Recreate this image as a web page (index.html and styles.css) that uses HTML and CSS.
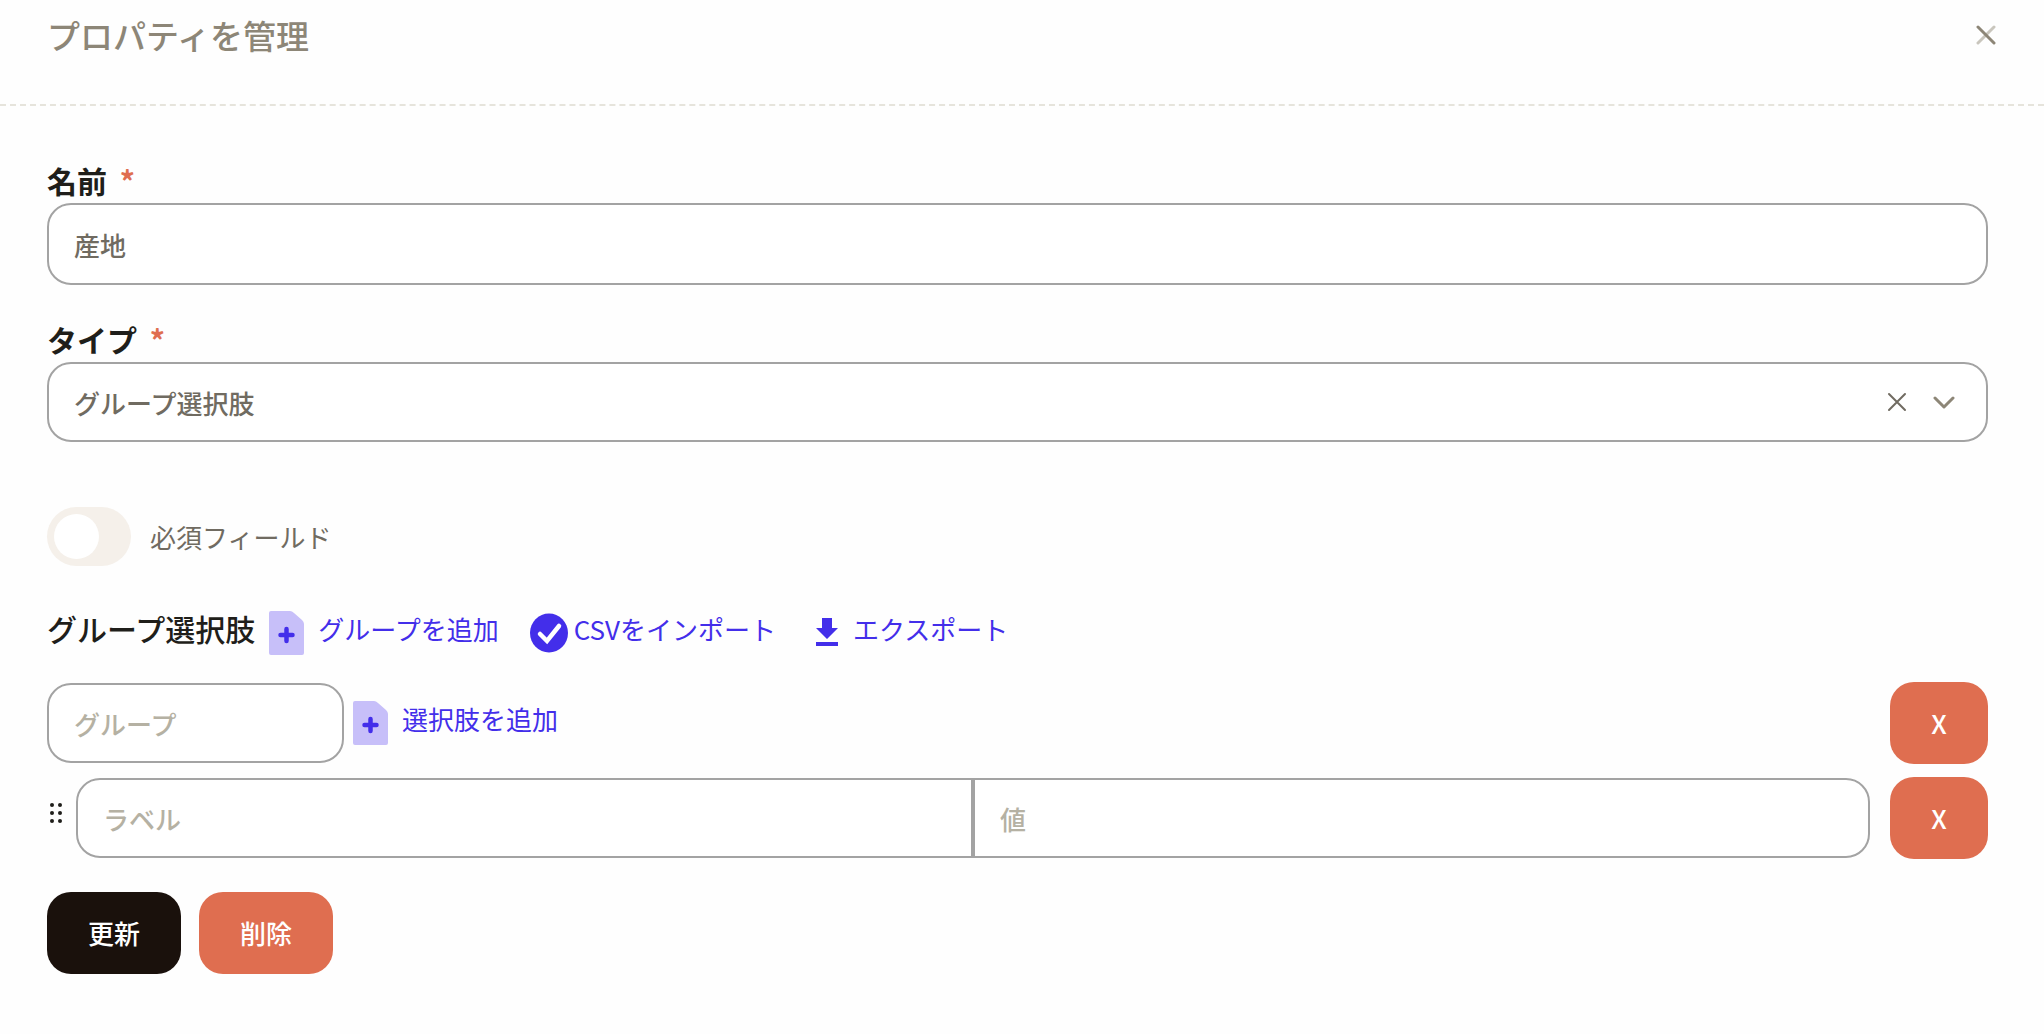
FILE: index.html
```html
<!DOCTYPE html>
<html lang="ja">
<head>
  <meta charset="UTF-8">
  <meta name="viewport" content="width=device-width, initial-scale=1.0">
  <title>プロパティを管理</title>
  <link rel="stylesheet" href="styles.css">
</head>
<body>
  <header class="header">
    <h1 class="title">プロパティを管理</h1>
    <button type="button" class="icon-button" aria-label="閉じる">
      <svg width="20" height="20" viewBox="0 0 20 20" fill="none" stroke="#8d8677" stroke-width="3" stroke-linecap="round">
        <path d="M18 2L2 18" stroke="#c9c6bd"/>
        <path d="M2 2l16 16"/>
      </svg>
    </button>
  </header>

  <form class="form">
    <div class="field">
      <label for="name" class="label">名前 <span class="required">*</span></label>
      <input id="name" class="input input-tall" type="text" value="産地">
    </div>

    <div class="field">
      <label for="type" class="label">タイプ <span class="required">*</span></label>
      <div class="select-box">
        <select id="type" class="input select">
          <option>グループ選択肢</option>
        </select>
        <div class="select-icons">
          <button type="button" class="icon-button" aria-label="クリア">
            <svg width="20" height="20" viewBox="0 0 20 20" fill="none" stroke="#706b61" stroke-width="2" stroke-linecap="round">
              <path d="M2 2l16 16M18 2L2 18"/>
            </svg>
          </button>
          <svg class="chevron" width="22" height="14" viewBox="0 0 22 14" fill="none" stroke="#8d8677" stroke-width="3" stroke-linecap="round" stroke-linejoin="round">
            <path d="M2 3l9 9 9-9"/>
          </svg>
        </div>
      </div>
    </div>

    <div class="switch-row">
      <input id="required" class="switch" type="checkbox">
      <label for="required">必須フィールド</label>
    </div>

    <div class="group-header">
      <h2 class="subtitle">グループ選択肢</h2>
      <button type="button" class="link add-link">
        <svg width="35" height="44" viewBox="0 0 35 44">
          <path d="M2 0H21Q23 0 25 2L33 9Q35 11 35 13V42Q35 44 33 44H2Q0 44 0 42V2Q0 0 2 0Z" fill="#c7bff9"/>
          <path d="M17.500 18v12M11.500 24h12" stroke="#432eea" stroke-width="4.500" stroke-linecap="round"/>
        </svg>
        <span>グループを追加</span>
      </button>
      <button type="button" class="link import-link">
        <svg width="38" height="40" viewBox="0 0 38 40">
          <ellipse cx="19" cy="20" rx="19" ry="19.500" fill="#432eea"/>
          <path d="M10 21l7 7 12-15" fill="none" stroke="#fff" stroke-width="4.500" stroke-linecap="round"/>
        </svg>
        <span>CSVをインポート</span>
      </button>
      <button type="button" class="link export-link">
        <svg width="22" height="28" viewBox="0 0 22 28" fill="#432eea">
          <path d="M6 0h10v10h6L11 21 0 10h6zM0 24h22v4H0z"/>
        </svg>
        <span>エクスポート</span>
      </button>
    </div>

    <div class="row">
      <input class="input group-input" type="text" placeholder="グループ" aria-label="グループ">
      <button type="button" class="link add-link">
        <svg width="35" height="44" viewBox="0 0 35 44">
          <path d="M2 0H21Q23 0 25 2L33 9Q35 11 35 13V42Q35 44 33 44H2Q0 44 0 42V2Q0 0 2 0Z" fill="#c7bff9"/>
          <path d="M17.500 18v12M11.500 24h12" stroke="#432eea" stroke-width="4.500" stroke-linecap="round"/>
        </svg>
        <span>選択肢を追加</span>
      </button>
      <button type="button" class="button danger remove">X</button>
    </div>

    <div class="row option-row">
      <svg class="handle" width="12" height="20" viewBox="0 0 12 20" fill="#1f1e1a">
        <circle cx="2" cy="2" r="2"/><circle cx="10" cy="2" r="2"/>
        <circle cx="2" cy="10" r="2"/><circle cx="10" cy="10" r="2"/>
        <circle cx="2" cy="18" r="2"/><circle cx="10" cy="18" r="2"/>
      </svg>
      <div class="pair">
        <input class="input" type="text" placeholder="ラベル" aria-label="ラベル">
        <input class="input" type="text" placeholder="値" aria-label="値">
      </div>
      <button type="button" class="button danger remove">X</button>
    </div>

    <div class="actions">
      <button type="submit" class="button primary">更新</button>
      <button type="button" class="button danger">削除</button>
    </div>
  </form>
</body>
</html>
```
FILE: styles.css
```css
* {
  box-sizing: border-box;
}

body {
  margin: 0;
  background: #fefefe;
  color: #706b61;
  font-family: "Noto Sans CJK JP", sans-serif;
  font-size: 26px;
  line-height: 40px;
}

button,
input,
select {
  font: inherit;
}

button {
  border: none;
  cursor: pointer;
}

svg {
  display: block;
  flex: none;
}

.header {
  display: flex;
  justify-content: space-between;
  align-items: center;
  height: 106px;
  padding: 0 48px 34px 47px;
  border-bottom: 2px dashed #e6e4dc;
}

.title {
  margin: 0;
  color: #8d8677;
  font-size: 33px;
  font-weight: 500;
}

.icon-button {
  padding: 0;
  background: none;
}

.form {
  padding: 53px 56px 56px 47px;
}

.field {
  margin-bottom: 33px;
}

.label {
  display: block;
  padding-bottom: 2px;
  color: #1f1e1a;
  font-size: 30px;
  font-weight: 700;
  line-height: 42px;
}

.required {
  margin-left: 6px;
  color: #df6e50;
}

.input {
  display: block;
  width: 100%;
  height: 80px;
  padding: 0 25px;
  border: 2px solid #a3a3a3;
  border-radius: 24px;
  background: #fff;
  color: #706b61;
  font-weight: 500;
}

.input-tall {
  height: 82px;
}

.input::placeholder {
  color: #b5b1a3;
  opacity: 1;
}

.select-box {
  position: relative;
}

.select {
  appearance: none;
  padding-top: 2px;
}

/* clear button and chevron lie over the select */
.select-icons {
  position: absolute;
  top: 0;
  right: 33px;
  height: 100%;
  display: flex;
  align-items: center;
  gap: 26px;
}

.chevron {
  pointer-events: none;
}

.switch-row {
  display: flex;
  align-items: center;
  gap: 19px;
  margin: 65px 0 45px;
}

.switch {
  appearance: none;
  width: 84px;
  height: 59px;
  margin: 0;
  padding: 7px;
  border-radius: 30px;
  background: #f5f0ea;
}

.switch::before {
  content: "";
  display: block;
  width: 45px;
  height: 45px;
  border-radius: 50%;
  background: #fff;
}

.switch:checked::before {
  margin-left: auto;
}

.group-header {
  display: flex;
  align-items: center;
  height: 44px;
  margin-bottom: 27px;
}

.subtitle {
  margin: 0 12px 0 0;
  padding: 0 2px 10px 0;
  color: #1f1e1a;
  font-size: 30px;
  font-weight: 500;
}

.link {
  display: flex;
  align-items: center;
  padding: 0;
  background: none;
  color: #432eea;
}

.link span {
  padding-bottom: 8px;
}

.add-link {
  gap: 14px;
}

.import-link {
  gap: 6px;
  margin-left: 31px;
}

.export-link {
  gap: 15px;
  margin-left: 40px;
}

.export-link svg {
  margin-bottom: 2px;
}

.row {
  display: flex;
  align-items: center;
  margin-bottom: 13px;
}

.group-input {
  width: 297px;
  margin-right: 9px;
}

.button {
  height: 82px;
  padding: 0 41px;
  border-radius: 24px;
  color: #fff;
  font-weight: 500;
}

.primary {
  background: #1a110c;
}

.danger {
  background: #df6e50;
}

.remove {
  width: 98px;
  margin-left: auto;
}

.handle {
  margin: 0 14px 10px 3px;
}

.pair {
  display: flex;
  flex: 1;
  margin-right: 20px;
}

.pair .input:first-child {
  border-top-right-radius: 0;
  border-bottom-right-radius: 0;
}

.pair .input:last-child {
  border-top-left-radius: 0;
  border-bottom-left-radius: 0;
}

.actions {
  display: flex;
  gap: 18px;
  margin-top: 33px;
}
```
